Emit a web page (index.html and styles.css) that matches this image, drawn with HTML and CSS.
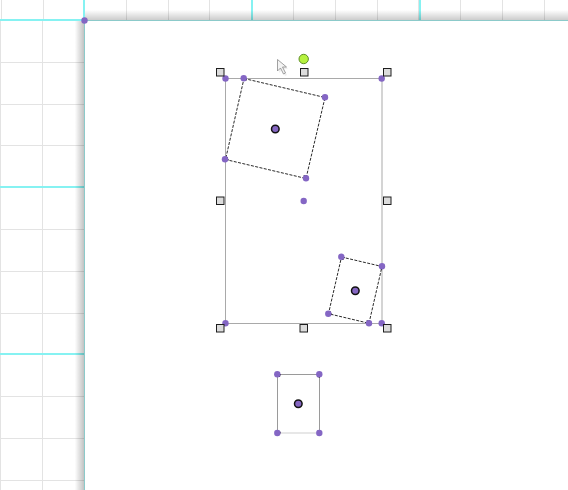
FILE: index.html
```html
<!DOCTYPE html>
<html lang="en">
<head>
<meta charset="utf-8">
<title>Canvas editor</title>
<link rel="stylesheet" href="styles.css">
</head>
<body>
<div class="editor">
  <div class="ruler-corner"></div>
  <div class="ruler ruler-top"></div>
  <div class="ruler ruler-left"></div>
  <div class="canvas">
    <svg class="stage" width="483" height="469" viewBox="85 21 483 469" xmlns="http://www.w3.org/2000/svg">
      <!-- origin marker -->
      <circle class="dot" cx="84.5" cy="20.5" r="3.2"/>

      <!-- selection bounding box -->
      <rect class="bbox" x="225.5" y="78.5" width="156.5" height="245"/>

      <!-- shape 1: rotated square -->
      <polygon class="shape-dash" points="244,78.5 325,97.5 306,178.5 225.5,159.5"/>
      <path class="tick" d="M246,81 l-2,-2.5 l3,0.3 M322.5,98 l3,-0.5 l-0.8,3 M304,175.5 l2,3 l0.5,-3.2 M227.5,157 l-2,2.5 l3,0.5"/>
      <circle class="center" cx="275.3" cy="129" r="3.8"/>

      <!-- shape 2: small rotated rect -->
      <polygon class="shape-dash" points="341.5,257 382,266.5 369,323.3 328.5,313.7"/>
      <path class="tick" d="M343,260 l-1.5,-3 l3,0.5 M379.5,267 l2.5,-0.5 l-0.6,3 M367,320.5 l2,2.8 l0.4,-3 M330.5,311.5 l-2,2.2 l3,0.4"/>
      <circle class="center" cx="355.3" cy="290.7" r="3.8"/>

      <!-- shape 3: upright rect -->
      <path class="shape-solid" d="M277.5,433 V374.5 H319.5 V433"/>
      <path class="shape-light" d="M277.5,433 H319.5"/>
      <path class="tick" d="M280,377 l-2.5,-2.5 l3,0 M317,377 l2.5,-2.5 l0,3 M280,431 l-2.5,2 l3,0 M317,431 l2.5,2 l0,-3"/>
      <circle class="center" cx="298.3" cy="403.7" r="3.8"/>

      <!-- vertex dots -->
      <circle class="dot" cx="225.5" cy="78.5" r="3.2"/>
      <circle class="dot" cx="381.7" cy="78.5" r="3.2"/>
      <circle class="dot" cx="225.5" cy="323.3" r="3.2"/>
      <circle class="dot" cx="381.7" cy="323.3" r="3.2"/>
      <circle class="dot" cx="303.7" cy="201" r="3.2"/>

      <circle class="dot" cx="243.7" cy="78.3" r="3.2"/>
      <circle class="dot" cx="325" cy="97.3" r="3.2"/>
      <circle class="dot" cx="306" cy="178.3" r="3.2"/>
      <circle class="dot" cx="225" cy="159.3" r="3.2"/>

      <circle class="dot" cx="341.3" cy="256.7" r="3.2"/>
      <circle class="dot" cx="382" cy="266.3" r="3.2"/>
      <circle class="dot" cx="369" cy="323.3" r="3.2"/>
      <circle class="dot" cx="328.3" cy="313.7" r="3.2"/>

      <circle class="dot" cx="277.3" cy="374.3" r="3.2"/>
      <circle class="dot" cx="319.3" cy="374.3" r="3.2"/>
      <circle class="dot" cx="277.3" cy="433" r="3.2"/>
      <circle class="dot" cx="319.3" cy="433" r="3.2"/>

      <!-- resize handles -->
      <rect class="handle" x="216.5" y="68.5" width="7.5" height="7.5"/>
      <rect class="handle" x="300.5" y="68.5" width="7.5" height="7.5"/>
      <rect class="handle" x="383.5" y="68.5" width="7.5" height="7.5"/>
      <rect class="handle" x="216.5" y="197" width="7.5" height="7.5"/>
      <rect class="handle" x="383.5" y="197" width="7.5" height="7.5"/>
      <rect class="handle" x="216.5" y="324.5" width="7.5" height="7.5"/>
      <rect class="handle" x="300" y="324.5" width="7.5" height="7.5"/>
      <rect class="handle" x="383.5" y="324.5" width="7.5" height="7.5"/>

      <!-- rotation handle -->
      <circle class="rotate" cx="303.7" cy="59" r="4.7"/>

      <!-- mouse cursor -->
      <path class="cursor-shadow" d="M279,61 V73 L282,70 L285,76 L287,75 L284,69 L288,69 Z"/>
      <path class="cursor" d="M277.5,59.5 V71 L280.5,68 L283.5,74 L285.5,73 L282.5,67 L286.5,67 Z"/>
    </svg>
  </div>
</div>
</body>
</html>
```

FILE: styles.css
```css
html, body {
  margin: 0;
  padding: 0;
  background: #ffffff;
  font-family: "Liberation Sans", Arial, sans-serif;
}

.editor {
  display: grid;
  grid-template-columns: 85px 483px;
  grid-template-rows: 21px 469px;
  width: 568px;
  height: 490px;
  overflow: hidden;
}

.ruler-corner {
  background:
    linear-gradient(to right, transparent 83px, #86f2f2 83px, #86f2f2 85px),
    linear-gradient(to bottom, transparent 19px, #86f2f2 19px, #86f2f2 21px),
    repeating-linear-gradient(to left, transparent 0, transparent 40.8px, #e3e3e3 40.8px, #e3e3e3 41.8px),
    #ffffff;
}

.ruler {
  position: relative;
  background-color: #ffffff;
}

.ruler-top {
  border-bottom: 1px solid #8ccaca;
  background-image:
    linear-gradient(to bottom, rgba(255,255,255,0) 50%, rgba(0,0,0,0.2) 100%),
    repeating-linear-gradient(to right, transparent 0, transparent 166.2px, #86f2f2 166.2px, #86f2f2 168.2px),
    repeating-linear-gradient(to right, transparent 0, transparent 40.8px, #e3e3e3 40.8px, #e3e3e3 41.8px);
  height: 20px;
}

.ruler-left {
  border-right: 1px solid #8ccaca;
  background-image:
    linear-gradient(to right, rgba(255,255,255,0) 89%, rgba(0,0,0,0.24) 100%),
    repeating-linear-gradient(to bottom, transparent 0, transparent 165.2px, #86f2f2 165.2px, #86f2f2 167.2px),
    repeating-linear-gradient(to bottom, transparent 0, transparent 40.8px, #e3e3e3 40.8px, #e3e3e3 41.8px),
    repeating-linear-gradient(to left, transparent 0, transparent 40.8px, #e3e3e3 40.8px, #e3e3e3 41.8px);
  background-position: 0 0, 0 0, 0 0, right 0 top 0;
  width: 84px;
}

.canvas {
  background: #ffffff;
  position: relative;
}

.stage {
  display: block;
  overflow: visible;
}

.bbox {
  fill: none;
  stroke: #a9a9a9;
  stroke-width: 1;
}

.shape-dash {
  fill: none;
  stroke: #111111;
  stroke-width: 0.9;
  stroke-dasharray: 3 1.4;
}

.shape-solid {
  fill: none;
  stroke: #9a9a9a;
  stroke-width: 1;
}

.shape-light {
  fill: none;
  stroke: #cfcfcf;
  stroke-width: 1;
}

.tick {
  fill: #000000;
  stroke: #000000;
  stroke-width: 1;
}

.center {
  fill: #8566c2;
  stroke: #111111;
  stroke-width: 1.5;
}

.dot {
  fill: #8466c4;
}

.handle {
  fill: #dcdcdc;
  stroke: #1e1e1e;
  stroke-width: 1;
}

.rotate {
  fill: #b6f23f;
  stroke: #5f8f26;
  stroke-width: 1;
}

.cursor {
  fill: #f4f4f4;
  stroke: #8a8a8a;
  stroke-width: 0.8;
  stroke-linejoin: round;
}

.cursor-shadow {
  fill: #e8e8e8;
  opacity: 0.7;
}
```
